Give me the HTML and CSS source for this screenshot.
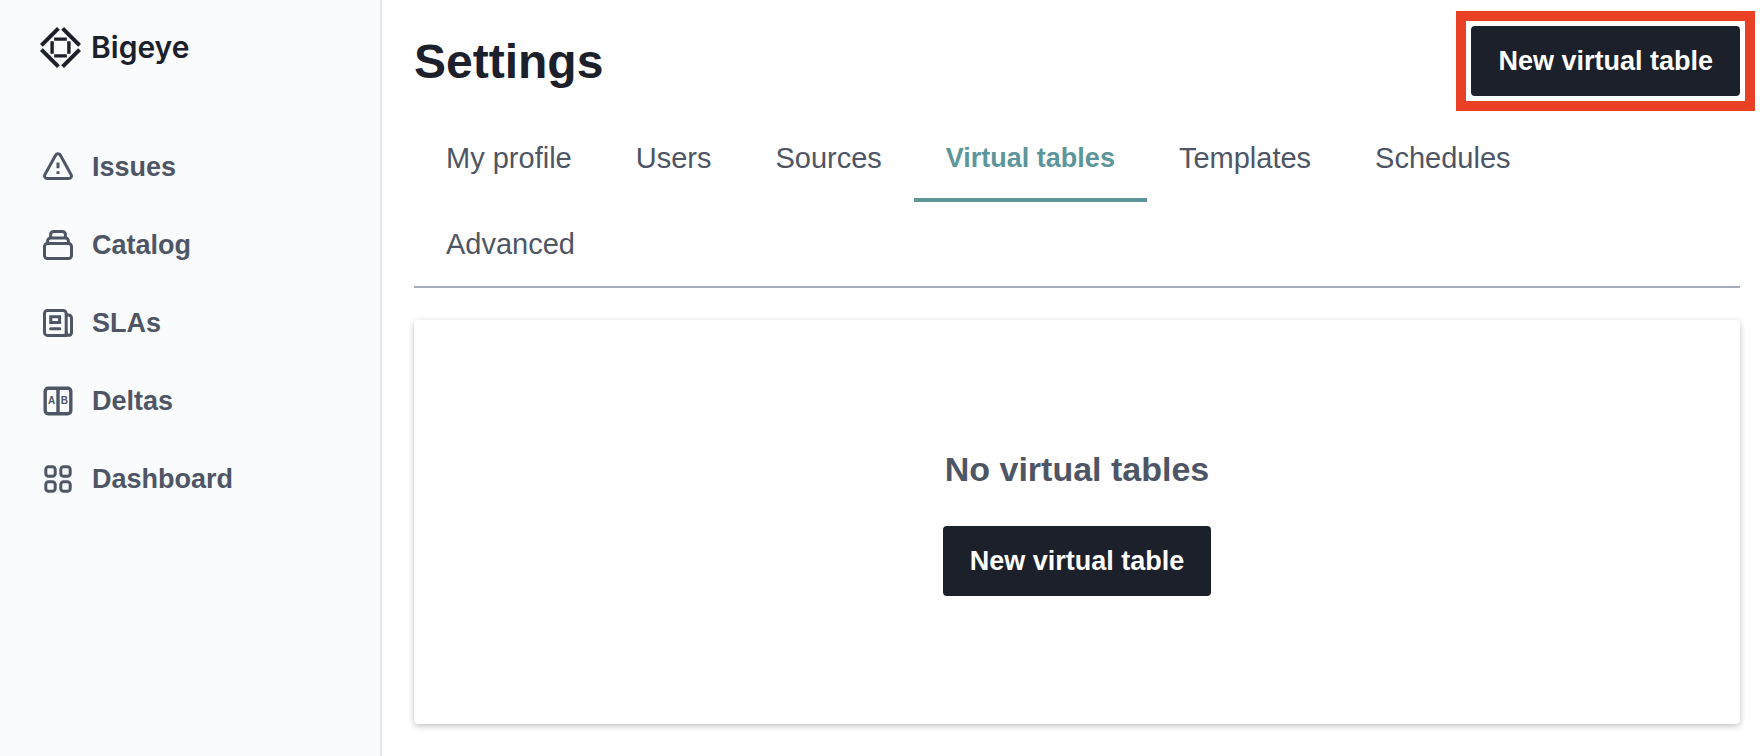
FILE: index.html
```
<!DOCTYPE html>
<html lang="en">

<head>
    <meta charset="UTF-8">
    <meta name="viewport" content="width=device-width, initial-scale=1.0">
    <title>Settings - Bigeye</title>
    <link rel="stylesheet" href="styles.css">
</head>

<body>
    <div class="app">
        <aside class="sidebar">
            <a href="#" class="logo">
                <svg class="logo-mark" viewBox="0 0 41 41" fill="none" stroke="currentColor" stroke-width="4">
                    <path d="M1.4 18.4 18.4 1.4M22.6 1.4 39.6 18.4M39.6 22.6 22.6 39.6M18.4 39.6 1.4 22.6" />
                    <path stroke-width="3.4" d="M14.2 12.1h12.6M14.2 28.9h12.6M12.1 14.2v12.6M28.9 14.2v12.6" />
                </svg>
                <span class="logo-text">Bigeye</span>
            </a>

            <nav class="nav">
                <a href="#" class="nav-item">
                    <svg class="nav-icon" viewBox="0 0 30 30" fill="none" stroke="currentColor" stroke-width="3" stroke-linecap="round" stroke-linejoin="round">
                        <path d="M12.6 3.2 1.9 22.6a2.7 2.7 0 0 0 2.4 4h21.4a2.7 2.7 0 0 0 2.4-4L17.4 3.2a2.8 2.8 0 0 0-4.8 0z" />
                        <path stroke-linecap="butt" d="M15 10.5v5.7M15 19.2v2.8" />
                    </svg>
                    <span>Issues</span>
                </a>
                <a href="#" class="nav-item">
                    <svg class="nav-icon" viewBox="0 0 30 30" fill="none" stroke="currentColor" stroke-width="3" stroke-linejoin="round">
                        <rect x="1.5" y="13.4" width="27" height="15.1" rx="3" />
                        <path d="M4.6 13.4v-2.4a3 3 0 0 1 3-3h14.8a3 3 0 0 1 3 3v2.4" />
                        <path d="M7.6 8V4.5a3 3 0 0 1 3-3h8.8a3 3 0 0 1 3 3V8" />
                    </svg>
                    <span>Catalog</span>
                </a>
                <a href="#" class="nav-item">
                    <svg class="nav-icon" viewBox="0 0 30 30" fill="none" stroke="currentColor" stroke-width="3" stroke-linecap="round" stroke-linejoin="round">
                        <path d="M23.2 27.4H4.5a3 3 0 0 1-3-3V5.4a3 3 0 0 1 3-3h15.7a3 3 0 0 1 3 3z" />
                        <path d="M23.2 7h2.3a3 3 0 0 1 3 3v14.7a2.6 2.6 0 0 1-5.3 0" />
                        <path stroke-linejoin="miter" d="M7.8 8.8h8.8v5.6H7.8zM7.6 20.8h9.2" />
                    </svg>
                    <span>SLAs</span>
                </a>
                <a href="#" class="nav-item">
                    <svg class="nav-icon" viewBox="0 0 30 30" fill="none" stroke="currentColor" stroke-width="3.4">
                        <rect x="2.2" y="2.2" width="25.6" height="25.6" rx="3" />
                        <path d="M15 2v26" />
                        <text class="nav-icon-letter" x="8.5" y="18.4">A</text>
                        <text class="nav-icon-letter" x="21.3" y="18.4">B</text>
                    </svg>
                    <span>Deltas</span>
                </a>
                <a href="#" class="nav-item">
                    <svg class="nav-icon" viewBox="0 0 30 30" fill="none" stroke="currentColor" stroke-width="3">
                        <rect x="2.8" y="2.8" width="9.4" height="9.4" rx="2.8" />
                        <rect x="17.8" y="2.8" width="9.4" height="9.4" rx="2.8" />
                        <rect x="2.8" y="17.8" width="9.4" height="9.4" rx="2.8" />
                        <rect x="17.8" y="17.8" width="9.4" height="9.4" rx="2.8" />
                    </svg>
                    <span>Dashboard</span>
                </a>
            </nav>
        </aside>

        <main class="main">
            <header class="header">
                <h1>Settings</h1>
                <button type="button" class="btn btn-highlight">New virtual table</button>
            </header>

            <nav class="tabs">
                <a href="#" class="tab">My profile</a>
                <a href="#" class="tab">Users</a>
                <a href="#" class="tab">Sources</a>
                <a href="#" class="tab active" aria-current="page">Virtual tables</a>
                <a href="#" class="tab">Templates</a>
                <a href="#" class="tab">Schedules</a>
                <a href="#" class="tab">Advanced</a>
            </nav>

            <section class="card">
                <h2>No virtual tables</h2>
                <button type="button" class="btn">New virtual table</button>
            </section>
        </main>
    </div>
</body>

</html>
```
FILE: styles.css
```
* {
    margin: 0;
    padding: 0;
    box-sizing: border-box;
}

body {
    background-color: #fff;
    color: #1c202b;
    font-family: "Liberation Sans", Arial, sans-serif;
}

a {
    color: inherit;
    text-decoration: none;
}

.app {
    display: flex;
    min-height: 100vh;
}

/* Sidebar */
.sidebar {
    flex: 0 0 382px;
    padding: 26px 40px;
    background-color: #f9fbfd;
    border-right: 2px solid #e2e7f0;
}

.logo {
    display: flex;
    align-items: center;
    gap: 10px;
    height: 42px;
}

.logo-mark {
    width: 41px;
    height: 41px;
}

.logo-text {
    font-family: Inter, sans-serif;
    font-size: 30px;
    font-weight: 600;
}

.nav {
    display: flex;
    flex-direction: column;
    margin-top: 60px;
}

.nav-item {
    display: flex;
    align-items: center;
    gap: 19px;
    height: 78px;
    padding-left: 3px;
    color: #4e5565;
    font-size: 27px;
    font-weight: bold;
}

.nav-icon {
    width: 30px;
    height: 30px;
}

.nav-icon-letter {
    fill: currentColor;
    stroke: none;
    font-size: 10px;
    text-anchor: middle;
}

/* Settings page */
.main {
    flex: 1;
    min-width: 0;
    display: flex;
    flex-direction: column;
    padding: 26px 20px 32px 32px;
}

.header {
    display: flex;
    justify-content: space-between;
    align-items: center;
    margin-bottom: 20px;
}

h1 {
    font-size: 48px;
}

.btn {
    height: 70px;
    padding: 0 27px;
    border: none;
    border-radius: 4px;
    background-color: #1c202b;
    color: #fff;
    font-family: inherit;
    font-size: 27px;
    font-weight: bold;
    cursor: pointer;
}

.btn-highlight {
    position: relative;
}

/* square frame around the rounded button */
.btn-highlight::after {
    content: "";
    position: absolute;
    inset: -15px;
    border: 10px solid #ea4025;
    pointer-events: none;
}

.tabs {
    display: flex;
    flex-wrap: wrap;
    margin-bottom: 32px;
    padding-right: 64px;
    border-bottom: 2px solid #a2acbd;
}

.tab {
    height: 86px;
    padding: 0 32px;
    border-bottom: 4px solid transparent;
    color: #4e5565;
    font-size: 29px;
    line-height: 84px;
}

.tab:last-child {
    margin-bottom: -2px;
}

.tab.active {
    border-bottom-color: #5c969b;
    color: #5c969b;
    font-size: 27px;
    font-weight: bold;
}

.card {
    flex: 1;
    display: flex;
    flex-direction: column;
    justify-content: center;
    align-items: center;
    gap: 36px;
    padding: 32px;
    border-radius: 4px;
    box-shadow: 0 2px 6px rgba(0, 0, 0, 0.25);
}

h2 {
    color: #4e5565;
    font-size: 34px;
    line-height: 42px;
}
```
